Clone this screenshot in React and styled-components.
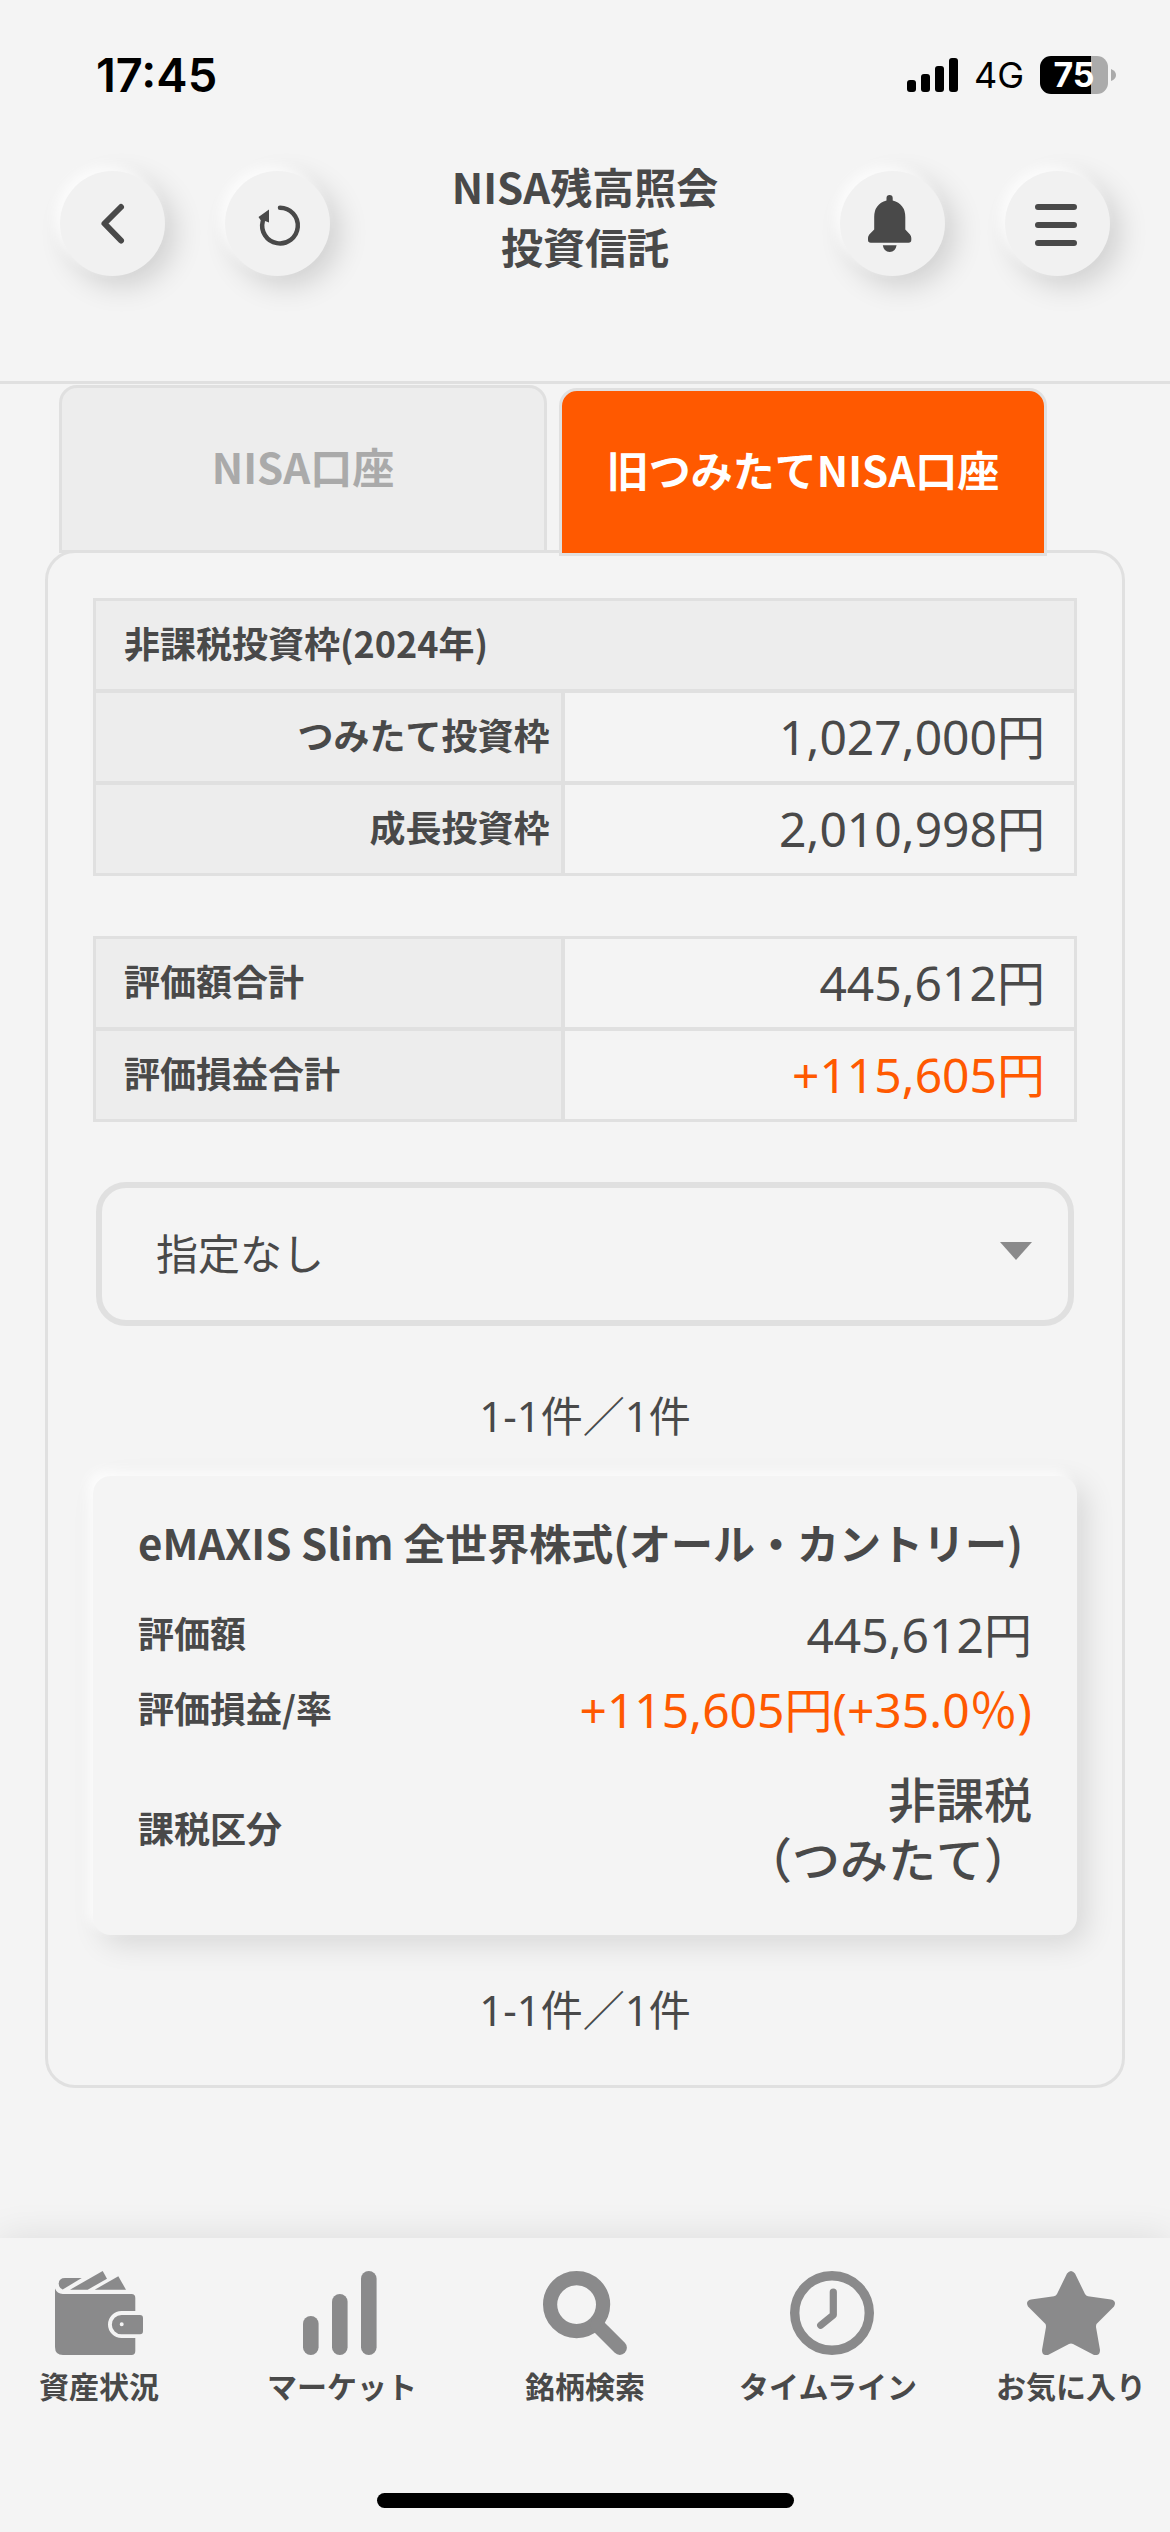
import styled, { createGlobalStyle } from "styled-components"

const GlobalStyle = createGlobalStyle`
    *{
        box-sizing:border-box;
    }
    body{
        margin:0;
        background-color:#f4f4f4;
        color:#494949;
        font-family:"Noto Sans CJK JP", sans-serif;
    }
`
const Container = styled.div`
    min-height:100vh;
    display:flex;
    flex-direction:column;
`
const StatusBar = styled.div`
    height:141px;
    padding:8px 54px 0px 96px;
    display:flex;
    align-items:center;
    justify-content:space-between;
    color:black;
    font-family:Inter, sans-serif;
`
const Time = styled.span`
    font-size:47px;
    font-weight:600;
`
const StatusIcons = styled.div`
    display:flex;
    align-items:center;
    gap:16px;
`
const Network = styled.span`
    font-size:36px;
`
const Battery = styled.div`
    display:flex;
    align-items:center;
    gap:3px;
`
const BatteryLevel = styled.div`
    width:68px;
    height:38px;
    border-radius:11px;
    background:linear-gradient(to right, black 75%, #ababab 75%);
    color:white;
    font-size:34px;
    font-weight:700;
    line-height:38px;
    text-align:center;
`
const Header = styled.header`
    height:243px;
    padding:15px 60px;
    display:flex;
    align-items:flex-start;
    justify-content:space-between;
    border-bottom:3px solid #e0e0e0;
`
const ButtonGroup = styled.div`
    display:flex;
    gap:60px;
    padding-top:15px;
`
const RoundButton = styled.button`
    width:105px;
    height:105px;
    padding:0;
    border:none;
    border-radius:50%;
    background-color:#f1f1f1;
    box-shadow:-6px -6px 12px rgba(255,255,255,0.8), 9px 9px 30px rgba(0,0,0,0.16);
    color:#494949;
    cursor:pointer;
`
const Title = styled.h1`
    margin:0;
    font-size:42px;
    font-weight:700;
    line-height:60px;
    text-align:center;
`
const Main = styled.main`
    flex:1;
    padding:1px 45px 150px;
`
const Tabs = styled.div`
    display:flex;
    align-items:flex-start;
    gap:12px;
    padding:0px 78px 0px 14px;
    margin-bottom:-6px;
`
const Tab = styled.button`
    flex:1;
    height:168px;
    margin-top:${props=>props.$active ? "3px" : "0px"};
    padding:0px 0px 8px;
    border:3px solid #e0e0e0;
    border-radius:18px 18px 0px 0px;
    background-color:${props=>props.$active ? "#ff5900" : "#ededed"};
    color:${props=>props.$active ? "white" : "#aaaaaa"};
    position:relative;
    font-family:inherit;
    font-size:42px;
    font-weight:700;
    cursor:pointer;
`
const Panel = styled.section`
    padding:45px;
    border:3px solid #e0e0e0;
    border-radius:30px;
`
const Table = styled.table`
    width:100%;
    margin-bottom:60px;
    table-layout:fixed;
    border:3px solid #e0e0e0;
    border-collapse:separate;
    border-spacing:0;

    tr:not(:last-child) > *{
        border-bottom:4px solid #e0e0e0;
        height:92px;
    }
`
const LabelCol = styled.col`
    width:48%;
`
const HeadCell = styled.th`
    height:88px;
    padding:0px 12px 6px 28px;
    border-right:${props=>props.colSpan ? "none" : "4px solid #e0e0e0"};
    background-color:#ededed;
    font-size:36px;
    font-weight:700;
    line-height:52px;
    text-align:${props=>props.$align || "left"};
`
const ValueCell = styled.td`
    padding:0px 29px 0px 0px;
    color:${props=>props.$plus ? "#ff5900" : "inherit"};
    font-family:"Noto Sans", "Noto Sans CJK JP", sans-serif;
    font-size:48px;
    line-height:60px;
    text-align:right;
`
const SelectBox = styled.div`
    display:grid;
    align-items:center;
    margin:0px 3px 60px;

    > *{
        grid-area:1 / 1;
    }
`
const Select = styled.select`
    appearance:none;
    width:100%;
    height:144px;
    padding:0px 54px 6px;
    border:6px solid #e0e0e0;
    border-radius:30px;
    background-color:transparent;
    color:inherit;
    font-family:inherit;
    font-size:42px;
`
const Arrow = styled.svg`
    justify-self:end;
    margin:0px 42px 6px 0px;
    pointer-events:none;
`
const Count = styled.p`
    margin:0;
    font-family:"Noto Sans", "Noto Sans CJK JP", sans-serif;
    font-size:42px;
    line-height:60px;
    text-align:center;
`
const Card = styled.article`
    margin:30px 0px 45px;
    padding:36px 45px 45px;
    border-radius:18px;
    box-shadow:-6px -6px 12px rgba(255,255,255,0.8), 9px 9px 30px rgba(0,0,0,0.12);
    background-color:#f4f4f4;
`
const FundName = styled.h2`
    margin:0px 0px 33px;
    font-size:42px;
    font-weight:700;
    line-height:60px;
`
const Detail = styled.dl`
    margin:0;
    display:grid;
    grid-template-columns:auto 1fr;
    align-items:center;
    row-gap:15px;
`
const Label = styled.dt`
    padding:${props=>props.$multi ? "15px 0px 6px" : "0px 0px 6px"};
    font-size:36px;
    font-weight:700;
    line-height:54px;
`
const Value = styled.dd`
    margin:0;
    padding-top:${props=>props.$multi ? "15px" : "0px"};
    color:${props=>props.$plus ? "#ff5900" : "inherit"};
    font-family:"Noto Sans", "Noto Sans CJK JP", sans-serif;
    font-size:48px;
    font-weight:${props=>props.$multi ? 500 : 400};
    line-height:60px;
    text-align:right;
`
const Nav = styled.nav`
    height:294px;
    padding:33px 0px 24px;
    display:flex;
    flex-direction:column;
    align-items:center;
    justify-content:space-between;
    background-color:#f4f4f4;
    box-shadow:0px 0px 36px rgba(0,0,0,0.1);
`
const NavList = styled.div`
    width:100%;
    display:flex;
    justify-content:space-between;
`
const NavItem = styled.a`
    width:198px;
    display:flex;
    flex-direction:column;
    align-items:center;
    gap:8px;
    color:#494949;
    font-size:30px;
    font-weight:700;
    line-height:45px;
    text-decoration:none;
    white-space:nowrap;

    svg{
        color:#8a8a8b;
    }
`
const HomeBar = styled.div`
    width:417px;
    height:15px;
    border-radius:8px;
    background-color:black;
`

const BackIcon = () => (
    <svg width="105" height="105" fill="none" stroke="currentColor" strokeWidth="6" strokeLinecap="round" strokeLinejoin="round">
        <path d="M61 36L44.5 52.5L61 69.5"/>
    </svg>
)

const ReloadIcon = () => (
    <svg width="105" height="105" fill="none" stroke="currentColor" strokeWidth="4.5" strokeLinecap="round">
        <path d="M55 36.8A17.8 17.8 0 1 1 37.8 50"/>
        <path d="M33.5 46L44 38.5V51.5L40 50L35.5 49Z" fill="currentColor" stroke="none"/>
    </svg>
)

const BellIcon = () => (
    <svg width="105" height="105" fill="currentColor">
        <path d="M46.5 29.5V27Q46.5 24 49.6 24Q52.7 24 52.7 27V29.5Q65.3 33 65.3 46V58.5L70 63.5Q71.3 65 71.3 67V69Q71.3 71.7 68.5 71.7H30.8Q28 71.7 28 69V67Q28 65 29.3 63.5L34.2 58.5V46Q34.2 33 46.5 29.5Z"/>
        <path d="M42.8 74.3H56.6Q55.5 81 49.7 81Q43.9 81 42.8 74.3Z"/>
    </svg>
)

const MenuIcon = () => (
    <svg width="105" height="105" stroke="currentColor" strokeWidth="6" strokeLinecap="round">
        <path d="M33 36H69M33 54H69M33 72H69"/>
    </svg>
)

const SignalIcon = () => (
    <svg width="51" height="34" fill="currentColor">
        <rect x="0" y="22" width="9" height="12" rx="3"/>
        <rect x="14" y="16" width="9" height="18" rx="3"/>
        <rect x="28" y="8" width="9" height="26" rx="3"/>
        <rect x="42" y="0" width="9" height="34" rx="3"/>
    </svg>
)

const WalletIcon = () => (
    <svg width="88" height="84" fill="currentColor">
        <path d="M0 17.5Q2 22.5 7.7 23H76.5Q80.3 23 80.3 27V40H66.5A13.5 13.5 0 0 0 66.5 67H80.3V80Q80.3 84 76.5 84H8Q0 84 0 76Z"/>
        <path fillRule="evenodd" d="M66.5 44H85Q88 44 88 47V60Q88 63.3 85 63.3H66.5A9.6 9.6 0 0 1 66.5 44ZM66.7 51.3A2 2 0 1 0 66.7 55.3A2 2 0 1 0 66.7 51.3Z"/>
        <path d="M26.7 7L7.7 18.5Q3.7 17 3.7 12.5Q4 7 10 7Z"/>
        <path d="M15 18.7L47.7 0L52 7.7L32.7 18.7Z"/>
        <path d="M39.7 18.7L63.3 5.3L71 18.7Z"/>
    </svg>
)

const MarketIcon = () => (
    <svg width="78" height="84" fill="currentColor">
        <rect x="0" y="45" width="15.6" height="39" rx="7.8"/>
        <rect x="29" y="23" width="15.6" height="61" rx="7.8"/>
        <rect x="58" y="0" width="15.6" height="84" rx="7.8"/>
    </svg>
)

const SearchIcon = () => (
    <svg width="84" height="84" fill="none" stroke="currentColor" strokeWidth="14.2" strokeLinecap="round">
        <circle cx="33.6" cy="33.6" r="26.5"/>
        <path d="M54 54L76.8 76.8"/>
    </svg>
)

const ClockIcon = () => (
    <svg width="92" height="84" viewBox="-8 0 92 84" fill="none" stroke="currentColor" strokeWidth="9.4">
        <circle cx="42" cy="42" r="37.3"/>
        <path d="M43.3 21V44L30.7 54.3" strokeWidth="7.2" strokeLinecap="round" strokeLinejoin="round"/>
    </svg>
)

const StarIcon = () => (
    <svg width="88" height="84" fill="currentColor">
        <path d="M40 2.5Q44 -2.5 48 2.5L58 23Q59 25 61 25.3L84 28.5Q90 30 87 35.5L69.5 53Q69 54 69 56L73 79Q73 85 67 84L46 73Q44 72 42 73L21 84Q15 85 15 79L19 56Q19 54 18.5 53L1 35.5Q-2 30 4 28.5L27 25.3Q29 25 30 23Z"/>
    </svg>
)

const navItems = [
    { label: "資産状況", icon: <WalletIcon/> },
    { label: "マーケット", icon: <MarketIcon/> },
    { label: "銘柄検索", icon: <SearchIcon/> },
    { label: "タイムライン", icon: <ClockIcon/> },
    { label: "お気に入り", icon: <StarIcon/> },
]

const App = () => {
  return (
    <Container lang="ja">
        <GlobalStyle/>
        <StatusBar>
            <Time>17:45</Time>
            <StatusIcons>
                <SignalIcon/>
                <Network>4G</Network>
                <Battery>
                    <BatteryLevel>75</BatteryLevel>
                    <svg width="5" height="12" fill="#ababab"><path d="M0 0Q5 2 5 6Q5 10 0 12Z"/></svg>
                </Battery>
            </StatusIcons>
        </StatusBar>
        <Header>
            <ButtonGroup>
                <RoundButton aria-label="戻る"><BackIcon/></RoundButton>
                <RoundButton aria-label="更新"><ReloadIcon/></RoundButton>
            </ButtonGroup>
            <Title>NISA残高照会<br/>投資信託</Title>
            <ButtonGroup>
                <RoundButton aria-label="お知らせ"><BellIcon/></RoundButton>
                <RoundButton aria-label="メニュー"><MenuIcon/></RoundButton>
            </ButtonGroup>
        </Header>
        <Main>
            <Tabs>
                <Tab>NISA口座</Tab>
                <Tab $active>旧つみたてNISA口座</Tab>
            </Tabs>
            <Panel>
                <Table>
                    <colgroup><LabelCol/><col/></colgroup>
                    <tbody>
                        <tr>
                            <HeadCell colSpan={2}>非課税投資枠(2024年)</HeadCell>
                        </tr>
                        <tr>
                            <HeadCell scope="row" $align="right">つみたて投資枠</HeadCell>
                            <ValueCell>1,027,000円</ValueCell>
                        </tr>
                        <tr>
                            <HeadCell scope="row" $align="right">成長投資枠</HeadCell>
                            <ValueCell>2,010,998円</ValueCell>
                        </tr>
                    </tbody>
                </Table>
                <Table>
                    <colgroup><LabelCol/><col/></colgroup>
                    <tbody>
                        <tr>
                            <HeadCell scope="row">評価額合計</HeadCell>
                            <ValueCell>445,612円</ValueCell>
                        </tr>
                        <tr>
                            <HeadCell scope="row">評価損益合計</HeadCell>
                            <ValueCell $plus>+115,605円</ValueCell>
                        </tr>
                    </tbody>
                </Table>
                <SelectBox>
                    <Select aria-label="並び替え">
                        <option>指定なし</option>
                    </Select>
                    <Arrow width="32" height="18" fill="#8a8a8b"><path d="M0 0H32L16 18Z"/></Arrow>
                </SelectBox>
                <Count>1-1件／1件</Count>
                <Card>
                    <FundName>eMAXIS Slim 全世界株式(オール・カントリー)</FundName>
                    <Detail>
                        <Label>評価額</Label>
                        <Value>445,612円</Value>
                        <Label>評価損益/率</Label>
                        <Value $plus>+115,605円(+35.0％)</Value>
                        <Label $multi>課税区分</Label>
                        <Value $multi>非課税<br/>（つみたて）</Value>
                    </Detail>
                </Card>
                <Count>1-1件／1件</Count>
            </Panel>
        </Main>
        <Nav>
            <NavList>
                {navItems.map(item=>(
                    <NavItem href="#" key={item.label}>
                        {item.icon}
                        {item.label}
                    </NavItem>
                ))}
            </NavList>
            <HomeBar/>
        </Nav>
    </Container>
  )
}

export default App
